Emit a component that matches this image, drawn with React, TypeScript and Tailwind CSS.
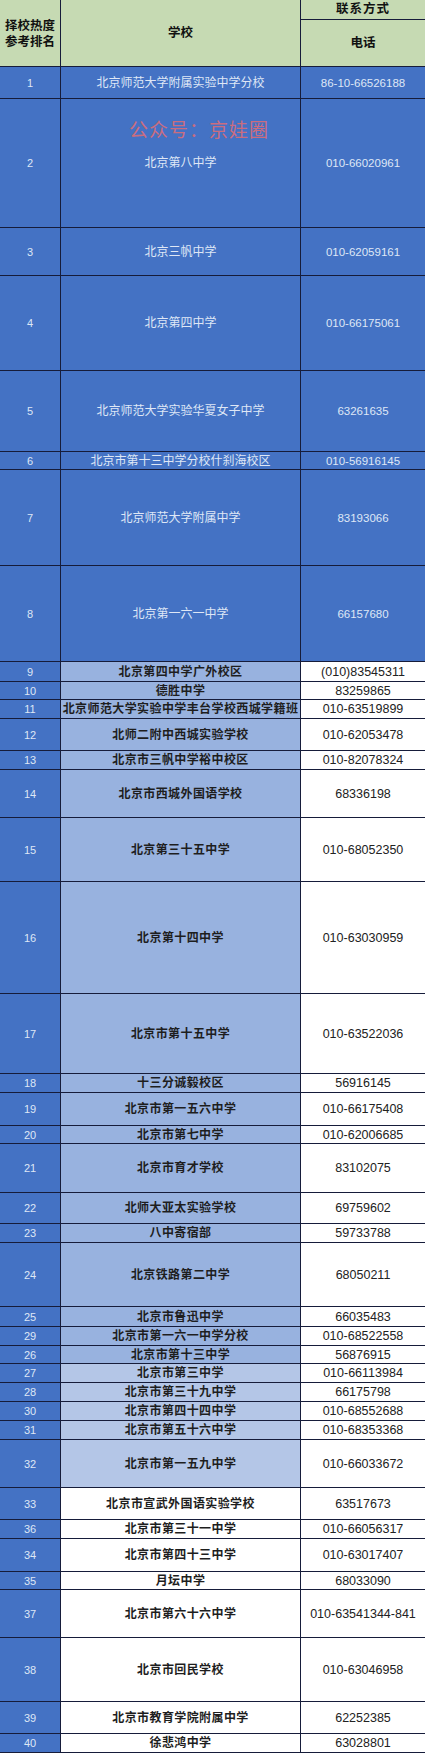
import React from 'react';

type Tone = 'dark' | 'mid' | 'light' | 'white';

type Row = { rank: string; school: string; phone: string; h: number; tone: Tone };

const rows: Row[] = [
  { rank: '1', school: '北京师范大学附属实验中学分校', phone: '86-10-66526188', h: 32, tone: 'dark' },
  { rank: '2', school: '北京第八中学', phone: '010-66020961', h: 129, tone: 'dark' },
  { rank: '3', school: '北京三帆中学', phone: '010-62059161', h: 48, tone: 'dark' },
  { rank: '4', school: '北京第四中学', phone: '010-66175061', h: 95, tone: 'dark' },
  { rank: '5', school: '北京师范大学实验华夏女子中学', phone: '63261635', h: 81, tone: 'dark' },
  { rank: '6', school: '北京市第十三中学分校什刹海校区', phone: '010-56916145', h: 18, tone: 'dark' },
  { rank: '7', school: '北京师范大学附属中学', phone: '83193066', h: 96, tone: 'dark' },
  { rank: '8', school: '北京第一六一中学', phone: '66157680', h: 96, tone: 'dark' },
  { rank: '9', school: '北京第四中学广外校区', phone: '(010)83545311', h: 20, tone: 'mid' },
  { rank: '10', school: '德胜中学', phone: '83259865', h: 18, tone: 'mid' },
  { rank: '11', school: '北京师范大学实验中学丰台学校西城学籍班', phone: '010-63519899', h: 19, tone: 'mid' },
  { rank: '12', school: '北师二附中西城实验学校', phone: '010-62053478', h: 32, tone: 'mid' },
  { rank: '13', school: '北京市三帆中学裕中校区', phone: '010-82078324', h: 19, tone: 'mid' },
  { rank: '14', school: '北京市西城外国语学校', phone: '68336198', h: 48, tone: 'mid' },
  { rank: '15', school: '北京第三十五中学', phone: '010-68052350', h: 64, tone: 'mid' },
  { rank: '16', school: '北京第十四中学', phone: '010-63030959', h: 112, tone: 'mid' },
  { rank: '17', school: '北京市第十五中学', phone: '010-63522036', h: 80, tone: 'mid' },
  { rank: '18', school: '十三分诚毅校区', phone: '56916145', h: 19, tone: 'mid' },
  { rank: '19', school: '北京市第一五六中学', phone: '010-66175408', h: 33, tone: 'mid' },
  { rank: '20', school: '北京市第七中学', phone: '010-62006685', h: 18, tone: 'mid' },
  { rank: '21', school: '北京市育才学校', phone: '83102075', h: 49, tone: 'mid' },
  { rank: '22', school: '北师大亚太实验学校', phone: '69759602', h: 31, tone: 'mid' },
  { rank: '23', school: '八中寄宿部', phone: '59733788', h: 19, tone: 'mid' },
  { rank: '24', school: '北京铁路第二中学', phone: '68050211', h: 64, tone: 'mid' },
  { rank: '25', school: '北京市鲁迅中学', phone: '66035483', h: 20, tone: 'mid' },
  { rank: '29', school: '北京市第一六一中学分校', phone: '010-68522558', h: 19, tone: 'mid' },
  { rank: '26', school: '北京市第十三中学', phone: '56876915', h: 18, tone: 'mid' },
  { rank: '27', school: '北京市第三中学', phone: '010-66113984', h: 19, tone: 'light' },
  { rank: '28', school: '北京市第三十九中学', phone: '66175798', h: 19, tone: 'light' },
  { rank: '30', school: '北京市第四十四中学', phone: '010-68552688', h: 19, tone: 'light' },
  { rank: '31', school: '北京市第五十六中学', phone: '010-68353368', h: 19, tone: 'light' },
  { rank: '32', school: '北京市第一五九中学', phone: '010-66033672', h: 48, tone: 'light' },
  { rank: '33', school: '北京市宣武外国语实验学校', phone: '63517673', h: 32, tone: 'white' },
  { rank: '36', school: '北京市第三十一中学', phone: '010-66056317', h: 19, tone: 'white' },
  { rank: '34', school: '北京市第四十三中学', phone: '010-63017407', h: 33, tone: 'white' },
  { rank: '35', school: '月坛中学', phone: '68033090', h: 18, tone: 'white' },
  { rank: '37', school: '北京市第六十六中学', phone: '010-63541344-841', h: 48, tone: 'white' },
  { rank: '38', school: '北京市回民学校', phone: '010-63046958', h: 64, tone: 'white' },
  { rank: '39', school: '北京市教育学院附属中学', phone: '62252385', h: 32, tone: 'white' },
  { rank: '40', school: '徐悲鸿中学', phone: '63028801', h: 19, tone: 'white' },
];

const schoolBg: Record<Tone, string> = {
  dark: 'bg-[#4472c4]',
  mid: 'bg-[#98b2df]',
  light: 'bg-[#b4c6e7]',
  white: 'bg-white',
};

const font = "font-['Liberation_Sans','Noto_Sans_CJK_SC',sans-serif]";

const TableRow: React.FC<{ row: Row }> = ({ row }) => {
  const dark = row.tone === 'dark';
  return (
    <div
      className="grid grid-cols-[60px_239px_124px] grid-rows-[100%] gap-x-px overflow-hidden leading-[14px]"
      style={{ height: row.h - 1 }}
    >
      <div className="flex items-center justify-center bg-[#4472c4] text-[11px] text-[#dfe7f6]">{row.rank}</div>
      <div className={`relative flex items-center justify-center whitespace-nowrap ${schoolBg[row.tone]} ${dark ? 'text-[12px] text-[#dfe7f6]' : 'text-[12px] font-bold tracking-[0.4px] text-[#1e1e1e]'}`}>
        {row.rank === '2' && (
          <span className="absolute left-[68px] top-[22px] text-[19px] leading-none tracking-[1px] text-[#c96d80]">公众号：京娃圈</span>
        )}
        {row.school}
      </div>
      <div className={`flex items-center justify-center whitespace-nowrap ${dark ? 'bg-[#4472c4] text-[11.5px] text-[#dfe7f6]' : 'bg-white text-[12.5px] text-[#222]'}`}>
        {row.phone}
      </div>
    </div>
  );
};

export default function App() {
  return (
    <div className={`w-[425px] ${font}`}>
      <div className="flex flex-col gap-px bg-[#161c3a] pb-px">
        <div className="grid h-[66px] grid-cols-[60px_239px_124px] gap-x-px text-[12.5px] font-bold text-[#111]">
          <div className="flex flex-col items-center justify-center bg-[#c6dab3] pt-[2px] leading-[16px]">
            <span>择校热度</span>
            <span>参考排名</span>
          </div>
          <div className="flex items-center justify-center bg-[#c6dab3]">学校</div>
          <div className="flex flex-col gap-px">
            <div className="flex h-[19px] items-center justify-center bg-[#c6dab3] tracking-[1px]">联系方式</div>
            <div className="flex flex-1 items-center justify-center bg-[#c6dab3]">电话</div>
          </div>
        </div>
        {rows.map(r => (
          <TableRow key={r.rank} row={r} />
        ))}
      </div>
    </div>
  );
}
